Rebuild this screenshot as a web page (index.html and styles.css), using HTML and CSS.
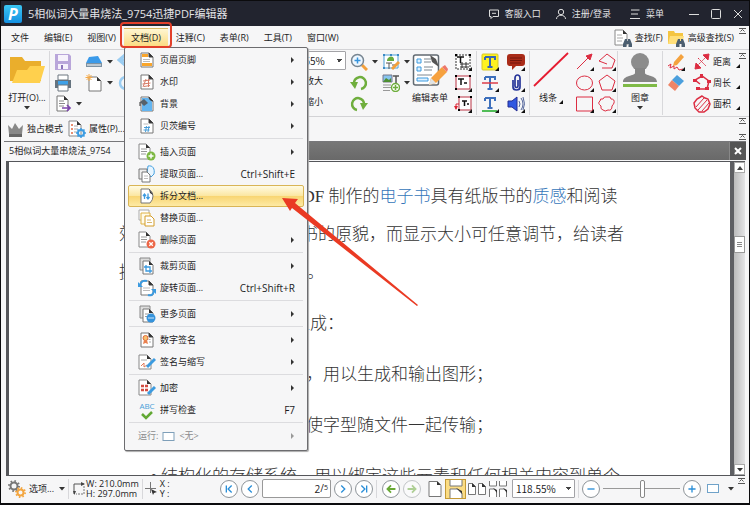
FILE: index.html
```html
<!DOCTYPE html>
<html lang="zh-CN">
<head>
<meta charset="utf-8">
<title>迅捷PDF编辑器</title>
<link rel="stylesheet" href="styles.css">
</head>
<body>
<svg class="sprite" aria-hidden="true">
  <symbol id="sheet" viewBox="0 0 18 18"><path d="M3 2h8l4 4v10H3z" fill="#fff" stroke="#777"/><path d="M11 2v4h4z" fill="#333" stroke="#444"/></symbol>
  <symbol id="pages" viewBox="0 0 18 18"><path d="M2 1h10v12H2z" fill="#ddd" stroke="#888"/><path d="M5 4h6l4 4v9H5z" fill="#fff" stroke="#777"/><path d="M11 4v4h4z" fill="#333"/></symbol>
  <symbol id="caret" viewBox="0 0 6 4"><path d="M0 0h6L3 3.5z" fill="#333"/></symbol>
  <symbol id="more" viewBox="0 0 7 6"><path d="M0 .5h7M0 5.5h7M1.500 3.500 3.500 1.500l2 2" fill="none" stroke="#555"/></symbol>
  <symbol id="corner" viewBox="0 0 4 4"><path d="M4 0v4H0z" fill="#111"/></symbol>
  <symbol id="binoc" viewBox="0 0 9 8"><path d="M2 0h2v2h1V0h2l2 5v3H5.500V5h-2v3H0V5z" fill="#4c5f70"/></symbol>
</svg>

<header class="titlebar">
  <span class="logo">P</span>
  <h1>5相似词大量串烧法_9754迅捷PDF编辑器</h1>
  <button class="t-btn"><svg width="12" height="12" viewBox="0 0 12 12"><path d="M1.500 2h9v6.500H5l-2 2v-2H1.500zM4 5.300h4" fill="none" stroke="#ddd"/></svg>客服入口</button>
  <button class="t-btn"><svg width="12" height="12" viewBox="0 0 12 12"><circle cx="6" cy="4" r="2.700" fill="none" stroke="#ddd"/><path d="M1.500 11c0-5 9-5 9 0" fill="none" stroke="#ddd"/></svg>注册/登录</button>
  <button class="t-btn"><svg width="12" height="12" viewBox="0 0 12 12"><path d="M2 2h8.500M2 6h7M1 10.500h10" stroke="#ddd"/></svg>菜单</button>
  <div class="win">
    <button aria-label="最小化"><svg width="12" height="12" viewBox="0 0 12 12"><path d="M1 6.500h10" stroke="#ddd"/></svg></button>
    <button aria-label="最大化"><svg width="12" height="12" viewBox="0 0 12 12"><rect x="1.500" y="1.500" width="9" height="9" rx="1" fill="none" stroke="#ddd"/></svg></button>
    <button aria-label="关闭"><svg width="12" height="12" viewBox="0 0 12 12"><path d="m2 2 8 8m0-8-8 8" stroke="#ddd"/></svg></button>
  </div>
</header>

<nav class="menubar">
  <button class="m-item">文件</button>
  <button class="m-item">编辑(E)</button>
  <button class="m-item">视图(V)</button>
  <div class="m-open">
    <button class="m-item active">文档(D)</button>
    <div class="mark-box"></div>
    <div class="menu" role="menu">
      <button class="row" role="menuitem"><svg viewBox="0 0 18 18"><use href="#sheet"/><path d="M4 3h6v3H4zM4 12h10v3H4z" fill="#f9a52b"/><path d="M5 8.500h7M5 10.500h7" stroke="#bbb"/></svg>页眉页脚<i class="arr"></i></button>
      <button class="row" role="menuitem"><svg viewBox="0 0 18 18"><use href="#sheet"/><path d="m5 8 7-1M4.500 11l8-1M8 6l-3 8M10.500 6v8M6 13.500l6-1" stroke="#d77b67" fill="none"/></svg>水印<i class="arr"></i></button>
      <button class="row" role="menuitem"><svg viewBox="0 0 18 18"><use href="#sheet"/><path d="M4 3h6l4 4v9H4z" fill="#63b5f1"/><path d="m2 7 4-3 4 4-4 3z" fill="#56616b"/><path d="M2 7v4" stroke="#333"/></svg>背景<i class="arr"></i></button>
      <button class="row" role="menuitem"><svg viewBox="0 0 18 18"><use href="#sheet"/><path d="M5.500 7h5" stroke="#bbb"/><path d="M6 10.500h6M5.500 13h6M8.500 9l-1 6M11 9l-1 6" stroke="#4a9ed8"/></svg>贝茨编号<i class="arr"></i></button>
      <hr>
      <button class="row" role="menuitem"><svg viewBox="0 0 18 18"><path d="M1 1h7l4 4v11H1z" fill="#fff" stroke="#888"/><path d="M8 1v4h4z" fill="#333"/><path d="M3 6h6M3 8.500h6M3 11h5" stroke="#999"/><circle cx="13" cy="13" r="4.500" fill="#7db843"/><path d="M13 10.500v5M10.500 13h5" stroke="#fff" stroke-width="1.500"/></svg>插入页面<i class="arr"></i></button>
      <button class="row" role="menuitem"><svg viewBox="0 0 18 18"><path d="M10 1c5-1 7 3 6 8l-3 3-4-4z" fill="#e7f5ff" stroke="#45a0e0"/><path d="M1 4h8v10H1z" fill="#eee" stroke="#777"/><path d="M4 7h5l3 3v7H4z" fill="#fff" stroke="#777"/><path d="M6 11h4M6 13.500h4" stroke="#bbb"/></svg>提取页面...<kbd>Ctrl+Shift+E</kbd></button>
      <button class="row current" role="menuitem"><svg viewBox="0 0 18 18"><path d="M3 2h8q4 3 4 7t-3 7H3z" fill="#fff" stroke="#777"/><path d="M11 2c1 2 3 3 4 6l-3-2z" fill="#333"/><path d="M6.500 12V7M5 9l1.500-2L8 9M10 6.500v5M8.500 10l1.500 2 1.500-2" fill="none" stroke="#3c9be0" stroke-width="1.300"/></svg>拆分文档...</button>
      <button class="row" role="menuitem"><svg viewBox="0 0 18 18"><path d="M1 1h10v10H1z" fill="#fff" stroke="#aaa"/><path d="M3 4h9v11H3z" fill="#fffbea" stroke="#dfb245"/><path d="M7 7h6l3 3v7H7z" fill="#fff" stroke="#d39c28"/><path d="M9 11h4M9 13.500h5" stroke="#d9b76b"/></svg>替换页面...</button>
      <button class="row" role="menuitem"><svg viewBox="0 0 18 18"><path d="M1 1h7l4 4v11H1z" fill="#fff" stroke="#888"/><path d="M8 1v4h4z" fill="#333"/><path d="M3 6h6M3 8.500h6M3 11h5" stroke="#999"/><circle cx="13" cy="13" r="4.500" fill="#ec6748"/><path d="m11.300 11.300 3.500 3.500m0-3.500-3.500 3.500" stroke="#fff" stroke-width="1.300"/></svg>删除页面<i class="arr"></i></button>
      <hr>
      <button class="row" role="menuitem"><svg viewBox="0 0 18 18"><use href="#pages"/><path d="M8 8v6h6M6 10h6v6" fill="none" stroke="#3c9be0" stroke-width="1.300"/></svg>裁剪页面<i class="arr"></i></button>
      <button class="row" role="menuitem"><svg viewBox="0 0 18 18"><use href="#sheet"/><path d="M5 9h7M5 11.500h7" stroke="#bbb"/><path d="M2 6c1-4 4-5 7-4M16 12c-1 4-3 5-6 4" fill="none" stroke="#3c9be0" stroke-width="2"/><path d="M0 3v5h5zM18 15v-5h-5z" fill="#3c9be0"/></svg>旋转页面...<kbd>Ctrl+Shift+R</kbd></button>
      <hr>
      <button class="row" role="menuitem"><svg viewBox="0 0 18 18"><use href="#pages"/><path d="M7 9h4M7 11.500h4" stroke="#999"/><circle cx="13" cy="13" r="4.500" fill="#3593dc"/><path d="M10.500 13h5" stroke="#fff" stroke-width="1.300" stroke-dasharray="1 1"/></svg>更多页面<i class="arr"></i></button>
      <hr>
      <button class="row" role="menuitem"><svg viewBox="0 0 18 18"><use href="#sheet"/><circle cx="7.500" cy="7" r="2.500" fill="#f5c16e" stroke="#e06a3c"/><path d="m6 9-1 4 2.500-1L10 13 9 9z" fill="#e9804f"/><path d="M10.500 8.500h2M11 11h2" stroke="#aaa"/></svg>数字签名<i class="arr"></i></button>
      <button class="row" role="menuitem"><svg viewBox="0 0 18 18"><path d="M1 2h8l4 4v10H1z" fill="#fff" stroke="#888"/><path d="M9 2v4h4z" fill="#333"/><path d="M3 7h6" stroke="#aaa"/><path d="m3 13 3-3v4l3-2" stroke="#e17b5a" fill="none"/><path d="m9 14 8-8" stroke="#3c9be0" stroke-width="3"/></svg>签名与缩写<i class="arr"></i></button>
      <hr>
      <button class="row" role="menuitem"><svg viewBox="0 0 18 18"><path d="M1 1h8l4 4v11H1z" fill="#fff" stroke="#888"/><path d="M9 1v4h4z" fill="#333"/><path d="M3 7h7M3 11h7" stroke="#d34d42" stroke-width="2.500" stroke-dasharray="3 1"/><path d="m10 15 7-7" stroke="#3c9be0" stroke-width="3"/></svg>加密<i class="arr"></i></button>
      <button class="row" role="menuitem"><span class="abc">ABC<svg viewBox="0 0 18 9"><path d="m4 3 4 4 6-6" fill="none" stroke="#62a834" stroke-width="2.500"/></svg></span>拼写检查<kbd>F7</kbd></button>
      <hr>
      <button class="row off" role="menuitem" disabled>运行:<svg class="mini" viewBox="0 0 13 11"><rect x="1" y="1.500" width="11" height="8" fill="#fff" stroke="#7e9fb9"/></svg>&lt;无&gt;<i class="arr"></i></button>
    </div>
  </div>
  <button class="m-item">注释(C)</button>
  <button class="m-item">表单(R)</button>
  <button class="m-item">工具(T)</button>
  <button class="m-item">窗口(W)</button>
  <div class="finders">
    <button><svg width="18" height="18" viewBox="0 0 18 18"><path d="M1 1h8l4 4v11H1z" fill="#fff" stroke="#888"/><path d="M9 1v4h4z" fill="#333"/><path d="M3 6h5M3 9h6M3 12h5" stroke="#aaa"/><use href="#binoc" x="9" y="10" width="9" height="8"/></svg>查找(F)</button>
    <button><svg width="18" height="18" viewBox="0 0 18 18"><path d="M1 2h6l1 2h8v11H1z" fill="#f4c542"/><path d="M3 7h14l-2 8H1z" fill="#ffdf7a"/><use href="#binoc" x="9" y="10" width="9" height="8"/></svg>高级查找(S)</button>
  </div>
  <svg class="more"><use href="#more"/></svg>
</nav>

<section class="ribbon">
  <button class="big">
    <svg viewBox="0 0 36 34"><path d="M1 4h12l3 4h16v20H1z" fill="#eaae2c"/><path d="M8 17h10l3-4h15l-5 17H3z" fill="#ffd04d"/></svg>
    <span>打开(O)...</span><svg class="caret"><use href="#caret"/></svg>
  </button>
  <div class="stack line">
    <button aria-label="保存"><svg viewBox="0 0 18 18"><path d="M1 1h14l2 2v14H1z" fill="#b9a6da"/><path d="M4 2h10v6H4zM4 11h10v5H4z" fill="#f6f2fb"/><path d="M7 12h2v4H7z" fill="#8b75ba"/></svg></button>
    <button aria-label="打印"><svg viewBox="0 0 18 18"><path d="M4 1h10v5H4z" fill="#fff" stroke="#6c7780"/><path d="M1 6h16v8H1z" fill="#65737f"/><path d="M4 7h10v4H4z" fill="#3fa1e8"/><path d="M4 11h10v6H4z" fill="#fff" stroke="#6c7780"/></svg></button>
    <button aria-label="导出"><svg viewBox="0 0 18 18"><path d="M3 1h7l4 4v11H3z" fill="#fff" stroke="#777"/><path d="M10 1v4h4z" fill="#333"/><path d="M5 6h5M5 8.500h6M5 11h5" stroke="#888"/><path d="M8 13h8m-3-3 3 3-3 3" fill="none" stroke="#7d46ad" stroke-width="1.700"/></svg><svg class="caret"><use href="#caret"/></svg></button>
  </div>
  <div class="stack">
    <button aria-label="扫描"><svg viewBox="0 0 18 18"><path d="m4 4 9-1 4 7H1z" fill="#3b9ae9"/><path d="M1 10h16v4H1z" fill="#7d91a1"/><path d="M2 12h14" stroke="#fff"/></svg><svg class="caret"><use href="#caret"/></svg></button>
    <button aria-label="新建"><svg viewBox="0 0 18 18"><path d="M4 3h8l4 4v10H4z" fill="#fff" stroke="#777"/><path d="M12 3v4h4z" fill="#333"/><path d="M4 0v7M.5 3.500h7M1.500 1l5 5m0-5-5 5" stroke="#f5a947"/></svg><svg class="caret"><use href="#caret"/></svg></button>
  </div>
  <div class="stack">
    <button aria-label="撤销"><svg viewBox="0 0 18 18"><path d="M8 2 2 7l6 5M2 7h14" stroke="#9bcdf2" stroke-width="3" fill="none"/></svg></button>
    <button aria-label="重做"><svg viewBox="0 0 18 18"><circle cx="9" cy="9" r="6" stroke="#9bcdf2" stroke-width="2.500" fill="none"/></svg></button>
  </div>
  <div class="stack zoomers">
    <select aria-label="缩放"><option>118.55%</option></select>
    <button>放大</button>
    <button>缩小</button>
  </div>
  <div class="stack">
    <button aria-label="缩放工具"><svg viewBox="0 0 18 18"><path d="m12 12 5 5" stroke="#f3a03c" stroke-width="3"/><circle cx="7.500" cy="7.500" r="6" fill="#eef7ff" stroke="#778591" stroke-width="1.500"/><path d="M7.500 4.500v6M4.500 7.500h6" stroke="#3593dc" stroke-width="1.500"/></svg><svg class="caret"><use href="#caret"/></svg></button>
    <button aria-label="向左旋转"><svg viewBox="0 0 18 18"><path d="M4 10a6 6 0 1 1 7 5" fill="none" stroke="#6fae3d" stroke-width="2.500"/><path d="M0 8h8l-3 7z" fill="#6fae3d"/></svg></button>
    <button aria-label="向右旋转"><svg viewBox="0 0 18 18"><path d="M14 10a6 6 0 1 0-7 5" fill="none" stroke="#6fae3d" stroke-width="2.500"/><path d="M18 8h-8l3 7z" fill="#6fae3d"/></svg></button>
  </div>
  <div class="stack">
    <button aria-label="编辑内容"><svg viewBox="0 0 18 18"><path d="M2 2h14v13H2z" fill="#fff" stroke="#4a9ed8"/><path d="M5 7c1-4 6-5 7-1v2H5z" fill="#67ac3d"/><path d="M1 1h2v2H1zM8 1h2v2H8zM15 1h2v2h-2zM1 14h2v2H1z" fill="#3b8ac4"/><path d="M4 10h6M7 10v6M10 12h3" stroke="#555"/><path d="m10 16 7-7" stroke="#f3a03c" stroke-width="3"/></svg><svg class="caret"><use href="#caret"/></svg></button>
    <button aria-label="添加内容"><svg viewBox="0 0 18 18"><path d="M1 1h9v7H1z" fill="#87c4ef" stroke="#778"/><path d="m1 8 3-4 3 2 2-2v4z" fill="#4e8f31"/><path d="M11 2h6M14 2v7" stroke="#555" stroke-width="1.500"/><path d="M1 11h8M1 13.500h8M1 16.500h7" stroke="#999"/><circle cx="13.500" cy="13.500" r="4" fill="#fff" stroke="#6fae3d" stroke-width="1.500"/><path d="M13.500 11v5M11 13.500h5" stroke="#6fae3d" stroke-width="1.500"/></svg><svg class="caret"><use href="#caret"/></svg></button>
  </div>
  <button class="big">
    <svg viewBox="0 0 36 34"><rect x="1.500" y="2" width="25" height="30" rx="2" fill="#fff" stroke="#616a72" stroke-width="1.500"/><path d="M5 6h4v4H5zM5 14h4v4H5zM5 25h11v3H5z" fill="#dff1ff" stroke="#3c9be0"/><path d="M12 6h7M12 9h7M12 14h9M12 17h8M5 22h15" stroke="#7c8790"/><path d="m18 2 6 4 3 8-7-5z" fill="#555"/><path d="m19 25 11-11 5 5-11 11-7 2z" fill="#f6a13f"/><path d="m30 14 3-2 3 4-1 3z" fill="#ee776a"/><path d="m17 32 2-7 5 5z" fill="#dfe3e6"/></svg>
    <span>编辑表单</span>
  </button>
  <div class="stack">
    <button aria-label="文本字段"><svg viewBox="0 0 18 18"><rect x="2" y="2" width="14" height="14" fill="#fff" stroke="#333" stroke-dasharray="2 1"/><path d="M3 4h7M6.500 4v6" stroke="#111" stroke-width="1.500"/><path d="M6 11h9M6 14h9M8 9v6M12 9v6" stroke="#333"/><path d="M1 1h2v2H1zM15 1h2v2h-2z"/><use href="#corner" x="14" y="14" width="4" height="4"/></svg></button>
    <button aria-label="文本框"><svg viewBox="0 0 18 18"><rect x="2" y="2" width="14" height="13" fill="#fff" stroke="#b93345"/><path d="M4 5h6M7 5v6M10 9h3" stroke="#111" stroke-width="1.500"/><path d="M1 1h2v2H1zM15 1h2v2h-2zM1 14h2v2H1z"/><use href="#corner" x="14" y="14" width="4" height="4"/></svg></button>
    <button aria-label="标注"><svg viewBox="0 0 18 18"><rect x="5" y="2" width="12" height="13" fill="#fff" stroke="#b93345"/><path d="M8 6h5M10.500 6v5M13 9h2" stroke="#111" stroke-width="1.500"/><path d="M5 9H2v5" fill="none" stroke="#dc2434"/><path d="M0 11h4l-2 4z" fill="#dc2434"/><path d="M4 1h2v2H4zM16 1h2v2h-2zM4 14h2v2H4z"/><use href="#corner" x="14" y="14" width="4" height="4"/></svg></button>
  </div>
  <div class="stack line">
    <button aria-label="高亮"><svg viewBox="0 0 18 18"><rect x="1" y="1" width="16" height="16" rx="1" fill="#fff21f" stroke="#d5c72c"/><path d="M4 4h10v3M4 7V4m5 0v10M6.500 14h5" fill="none" stroke="#3866b1" stroke-width="2"/><use href="#corner" x="14" y="14" width="4" height="4"/></svg></button>
    <button aria-label="删除线"><svg viewBox="0 0 18 18"><path d="M4 3h10v3M4 6V3m5 0v12M6.500 15h5" fill="none" stroke="#3d6fbc" stroke-width="2"/><path d="M1 9h16" stroke="#dc3c4a" stroke-width="1.500"/><use href="#corner" x="14" y="14" width="4" height="4"/></svg></button>
    <button aria-label="下划线"><svg viewBox="0 0 18 18"><path d="M4 3h10v3M4 6V3m5 0v10M6.500 13h5" fill="none" stroke="#3d6fbc" stroke-width="2"/><path d="M1 16h15" stroke="#51bd58" stroke-width="2"/><use href="#corner" x="14" y="14" width="4" height="4"/></svg></button>
  </div>
  <div class="stack">
    <button aria-label="批注"><svg viewBox="0 0 18 18"><path d="M3 1h12q3 0 3 3v6q0 3-3 3H9l-4 4v-4H3q-3 0-3-3V4q0-3 3-3z" fill="#a92b18"/><path d="M3 5h12M3 7.500h12M3 10h11" stroke="#74170d"/><use href="#corner" x="14" y="14" width="4" height="4"/></svg></button>
    <button aria-label="附件"><svg viewBox="0 0 18 18"><path d="M6 6v7c0 4 7 4 7 0V4c0-4-5-4-5 0v8c0 2 3 2 3 0V6" fill="none" stroke="#263599" stroke-width="1.700"/><use href="#corner" x="14" y="14" width="4" height="4"/></svg></button>
    <button aria-label="声音"><svg viewBox="0 0 18 18"><path d="M1 6h4l5-4v14l-5-4H1z" fill="#3158e1" stroke="#252d92"/><path d="M12 6q2 3 0 6m2-9q4 6 0 12m2-13q3 7 0 13" fill="none" stroke="#53659a"/><use href="#corner" x="14" y="14" width="4" height="4"/></svg></button>
  </div>
  <button class="big line">
    <svg viewBox="0 0 36 34"><path d="M1 33 35 0" stroke="#e61b30" stroke-width="1.800"/></svg>
    <span>线条<svg class="corner"><use href="#corner"/></svg></span>
  </button>
  <div class="stack red">
    <button aria-label="箭头"><svg viewBox="0 0 18 18"><path d="M1 16 14 3"/><path d="m16 1-2 6-4-4z" fill="#dc2d42"/><use href="#corner" x="14" y="14" width="4" height="4"/></svg></button>
    <button aria-label="椭圆"><svg viewBox="0 0 18 18"><ellipse cx="8.500" cy="9" rx="8" ry="7"/><use href="#corner" x="14" y="14" width="4" height="4"/></svg></button>
    <button aria-label="矩形"><svg viewBox="0 0 18 18"><path d="M.5 2h16v14H.5z"/><use href="#corner" x="14" y="14" width="4" height="4"/></svg></button>
  </div>
  <div class="stack red">
    <button aria-label="折线"><svg viewBox="0 0 18 18"><path d="M4 15h10l3-8-8-6-8 7 8 3"/><use href="#corner" x="14" y="14" width="4" height="4"/></svg></button>
    <button aria-label="多边形"><svg viewBox="0 0 18 18"><path d="m9 1 8 6-3 9H4L1 7z"/><use href="#corner" x="14" y="14" width="4" height="4"/></svg></button>
    <button aria-label="云朵"><svg viewBox="0 0 18 18"><path d="M9 2q4-1 4 2 4 0 3 4-1 2-2 3 0 5-4 4-3 2-5 0-3-1-2-4Q-1 8 2 6q0-3 3-2 1-3 4-2"/><use href="#corner" x="14" y="14" width="4" height="4"/></svg></button>
  </div>
  <button class="big line">
    <svg viewBox="0 0 36 34"><circle cx="18" cy="9" r="9" fill="#8c8c8c"/><path d="M13 15h10v5c0 3 12 2 12 9H1c0-7 12-6 12-9z" fill="#858585"/><path d="M1 31h34v3H1z" fill="#7fba47"/></svg>
    <span>图章</span><svg class="caret"><use href="#caret"/></svg>
  </button>
  <div class="stack line">
    <button aria-label="铅笔"><svg viewBox="0 0 18 18"><path d="m7 9 7-8 3 3-7 8-4 1z" fill="#f4a23e"/><path d="m1 13 3-2-1 4 4-2v3l3-2 2 3 4-1" fill="none" stroke="#e03043"/><use href="#corner" x="14" y="14" width="4" height="4"/></svg></button>
    <button aria-label="橡皮"><svg viewBox="0 0 18 18"><path d="m1 11 4-5 7 6-4 5z" fill="#ef8567"/><path d="m5 6 5-5 7 6-5 5z" fill="#4b9fdd"/></svg></button>
  </div>
  <div class="stack red text">
    <button><svg viewBox="0 0 18 18"><path d="M4 13 13 4M5 5l8 8" stroke-dasharray="2 1"/><path d="m2 16 1-6 5 5zM16 1l-6 1 5 5z" fill="#dc2d42"/></svg>距离<svg class="corner"><use href="#corner"/></svg></button>
    <button><svg viewBox="0 0 18 18"><path d="M5 15h9l2-8-7-5-7 4 5 4" stroke-width="1.500"/><path d="M7 0h3v4H7zM0 5h4v3H0zM14 6h4v3h-4zM3 13h4v3H3zM12 13h4v3h-4z" fill="#dc2d42" stroke="none"/></svg>周长<svg class="corner"><use href="#corner"/></svg></button>
    <button><svg viewBox="0 0 18 18"><path d="m9 1 3 2 3 1 2 5-2 5-4 3H6l-4-4-1-5 3-4z" stroke-width="1.500"/><path d="m3 12 8-9M5 15l9-10M9 16l7-8"/></svg>面积<svg class="corner"><use href="#corner"/></svg></button>
  </div>
  <svg class="more"><use href="#more"/></svg>
</section>

<section class="quick">
  <button><svg width="17" height="18" viewBox="0 0 17 18"><path d="m1 5 4 4 3-6 4 6 4-4-1 9H2z" fill="#888"/><path d="M2 14h13v3H2z" fill="#666"/></svg>独占模式</button>
  <button><svg width="18" height="18" viewBox="0 0 18 18"><path d="M1 1h8l4 4v11H1z" fill="#fff" stroke="#888"/><path d="M9 1v4h4z" fill="#333"/><path d="M3 5h2M3 9h2M3 13h2" stroke="#e26942" stroke-width="1.500"/><path d="M6 6h4M6 9h4M6 12h3" stroke="#aaa"/><circle cx="13" cy="13" r="3" fill="none" stroke="#3d9ce1" stroke-width="2"/><path d="M13 8v2M13 16v2M8 13h2M16 13h2M9.500 9.500l1 1m5 5 1 1m-7 0 1-1m5-5 1-1" stroke="#3d9ce1" stroke-width="1.500"/></svg>属性(P)...</button>
  <div class="mores"><svg class="more"><use href="#more"/></svg><svg class="more"><use href="#more"/></svg></div>
</section>

<div class="tabs">
  <button class="tab">5相似词大量串烧法_9754</button>
  <button class="close" aria-label="关闭文档"><svg width="8" height="8" viewBox="0 0 8 8"><path d="m1 1 6 6m0-6L1 7" stroke="#fff" stroke-width="2"/></svg></button>
</div>

<main class="viewer">
  <article class="page">
    <p class="opening">PDF 制作的<a href="#">电子书</a>具有纸版书的<a href="#">质感</a>和阅读</p>
    <p class="split"><span>效</span><span>书的原貌，而显示大小可任意调节，给读者</span></p>
    <p class="split ending"><span>提</span><span>。</span></p>
    <p class="loose opening">组成：</p>
    <p class="loose rest">，用以生成和输出图形；</p>
    <p class="loose rest">使字型随文件一起传输；</p>
    <ul class="loose"><li>结构化的存储系统，用以绑定这些元素和任何相关内容到单个</li></ul>
  </article>
  <div class="scroll">
    <button aria-label="向上滚动"><svg width="6" height="4" viewBox="0 0 6 4"><path d="m0 4 3-4 3 4z" fill="#444"/></svg></button>
    <div class="track"><div class="thumb"></div></div>
    <button aria-label="向下滚动"><svg width="6" height="4"><use href="#caret"/></svg></button>
  </div>
</main>

<footer class="status">
  <button class="opts"><svg width="18" height="18" viewBox="0 0 18 18"><circle cx="6" cy="6" r="3.500" fill="none" stroke="#777" stroke-width="2"/><circle cx="6" cy="6" r="5" fill="none" stroke="#777" stroke-width="2" stroke-dasharray="1.500 2.400"/><circle cx="12.500" cy="12.500" r="3" fill="none" stroke="#f3a640" stroke-width="2"/><circle cx="12.500" cy="12.500" r="4.500" fill="none" stroke="#f3a640" stroke-width="2" stroke-dasharray="1.500 2"/></svg>选项...<svg class="caret"><use href="#caret"/></svg></button>
  <div class="size"><svg width="12" height="13" viewBox="0 0 12 13"><path d="M1 12V2h10" fill="none" stroke="#555"/><path d="M11 4v8H3" fill="none" stroke="#777" stroke-dasharray="2 1"/><path d="m8 0 4 2-4 2zM0 9h3l-1.500 4z" fill="#444"/></svg><p>W: 210.0mm<br>H: 297.0mm</p></div>
  <div class="pos"><svg width="12" height="13" viewBox="0 0 12 13"><path d="M5.500 0v11M0 6.500h11" stroke="#777"/><path d="m6 7 6 3-3 1-1 2z" fill="#333"/></svg><p>X :<br>Y :</p></div>
  <div class="pager">
    <button class="round" aria-label="第一页"><svg viewBox="0 0 18 18"><path d="M6 5v8m6-8L8 9l4 4" /></svg></button>
    <button class="round" aria-label="上一页"><svg viewBox="0 0 18 18"><path d="M11 5 7 9l4 4"/></svg></button>
    <label class="pagebox"><input aria-label="页码" value="2"><span>/<small>5</small></span></label>
    <button class="round" aria-label="下一页"><svg viewBox="0 0 18 18"><path d="m7 5 4 4-4 4"/></svg></button>
    <button class="round" aria-label="最后一页"><svg viewBox="0 0 18 18"><path d="M12 5v8M6 5l4 4-4 4"/></svg></button>
  </div>
  <div class="history">
    <button class="round green" aria-label="后退"><svg viewBox="0 0 18 18"><path d="M14 9H5m4-4L5 9l4 4"/></svg></button>
    <button class="round green faded" aria-label="前进"><svg viewBox="0 0 18 18"><path d="M4 9h9M9 5l4 4-4 4"/></svg></button>
  </div>
  <div class="views">
    <button aria-label="单页"><svg viewBox="0 0 18 18"><path d="M3 1.500h8l4 4v11H3z" fill="#fff" stroke="#777"/><path d="M11 1v4h4z" fill="#333"/></svg></button>
    <button class="on" aria-label="连续"><svg viewBox="0 0 18 18"><path d="M3 0v6h12V0M3 18V9h8l4 4v5" fill="#fff" stroke="#777"/><path d="m9 8 6 3v3z" fill="#333"/></svg></button>
    <button aria-label="双页"><svg viewBox="0 0 18 18"><path d="M.5 3.500h4l3 3v8h-7zM10.500 3.500h4l3 3v8h-7z" fill="#fff" stroke="#777"/><path d="M4 3v4h4zM14 3v4h4z" fill="#333"/></svg></button>
    <button aria-label="双页连续"><svg viewBox="0 0 18 18"><path d="M.5 1v5h7V1M10.500 1v5h7V1M.5 17V9h5l2 2v6M10.500 17V9h5l2 2v6" fill="#fff" stroke="#777"/><path d="m4 8 4 2v3zM14 8l4 2v3z" fill="#333"/></svg></button>
  </div>
  <select aria-label="显示比例"><option>118.55%</option></select>
  <div class="zoombar">
    <button class="round" aria-label="缩小比例"><svg viewBox="0 0 18 18"><path d="M5 9h8"/></svg></button>
    <input type="range" aria-label="缩放滑块" min="0" max="100" value="52">
    <button class="round" aria-label="放大比例"><svg viewBox="0 0 18 18"><path d="M5 9h8M9 5v8"/></svg></button>
    <button class="fit" aria-label="适合窗口"><svg width="13" height="11" viewBox="0 0 13 11"><rect x=".5" y="1.500" width="11" height="8" fill="#fff" stroke="#6fa2c9"/></svg></button>
    <svg class="caret"><use href="#caret"/></svg>
  </div>
  <svg class="more"><use href="#more"/></svg>
</footer>

<svg class="pointer" width="140" height="112" viewBox="0 0 140 112" aria-hidden="true"><path d="M1 1 17 2l-3 4 123 102-1 1L11 11l-2 3z" fill="#ea3a23"/></svg>
</body>
</html>
```
FILE: styles.css
```css
* { box-sizing: border-box; }

body {
  margin: 0;
  height: 100vh;
  display: flex;
  flex-direction: column;
  overflow: hidden;
  position: relative;
  border: solid #0b0b0d;
  border-width: 1px 1px 2px 1px;
  background: #f6f6f7;
  color: #1c1c1e;
  font: 9px/12px "Open Sans", "Noto Sans CJK SC", sans-serif;
}

button, select, input {
  font: inherit;
  color: inherit;
  background: none;
  border: 0;
  padding: 0;
  margin: 0;
}

button { display: flex; align-items: center; white-space: nowrap; }
p, h1, ul { margin: 0; padding: 0; }
svg { flex: none; display: block; }
.sprite { position: absolute; width: 0; height: 0; }
.caret { width: 6px; height: 4px; }
.corner { width: 4px; height: 4px; }
.more { width: 7px; height: 6px; }

.titlebar {
  flex: none;
  display: flex;
  align-items: center;
  height: 25px;
  padding: 0 5px 0 3px;
  background: #22242f;
  color: #e2e3e6;
}
.titlebar h1 { flex: 1; margin-left: 6px; font-size: 11px; line-height: 16px; font-weight: 400; }
.logo {
  width: 18px;
  height: 18px;
  border-radius: 2px;
  background: linear-gradient(#3cc7f3, #1490e2);
  color: #fff;
  font: italic 700 16px/18px "Open Sans", sans-serif;
  text-align: center;
}
.t-btn { gap: 5px; margin-right: 14px; }
.t-btn + .t-btn + .t-btn { margin-left: 4px; margin-right: 24px; }
.win { display: flex; gap: 10px; }

.menubar {
  flex: none;
  display: flex;
  align-items: center;
  gap: 1px;
  height: 24px;
  padding: 0 3px;
  border-bottom: 1px solid #d3d3d6;
}
.m-item { height: 19px; padding: 0 7px; border: 1px solid transparent; border-width: 1px 0; }
.m-open { position: relative; }
.m-item.active { background: linear-gradient(#fff6d2, #fbdc83); border-color: #d7b660; }
.mark-box {
  position: absolute;
  inset: -6px -4px -1px -4px;
  border: 2px solid #e2402a;
  border-radius: 4px;
  z-index: 3;
  pointer-events: none;
}
.finders { display: flex; gap: 4px; margin: 0 4px 0 auto; }
.finders button { gap: 3px; }
.menubar .more, .ribbon .more { align-self: start; margin-top: 2px; }

.menu {
  position: absolute;
  z-index: 2;
  top: 19px;
  left: 0;
  width: 184px;
  padding: 1px 3px 3px;
  background: #f6f6f7;
  border: 1px solid #6c6c6f;
  border-radius: 2px;
  box-shadow: 1px 1px 1px #aaa;
}
.row {
  width: 100%;
  height: 22px;
  padding: 0 8px 0 9px;
  gap: 4px;
  border: 1px solid transparent;
  border-radius: 2px;
}
.row > svg { width: 18px; height: 18px; }
.row > svg.mini { width: 13px; height: 11px; }
.row kbd { margin-left: auto; font: inherit; font-size: 10px; }
.row.current { background: linear-gradient(#fffbe3, #fbe6a0 50%, #f8d572 51%, #fdeaa5); border-color: #d9b556; }
.row.off { color: #8b8b8d; }
.abc { width: 18px; color: #4a9ed8; font-size: 8px; line-height: 10px; }
.abc svg { width: 18px; height: 9px; }
.arr { margin: 0 1px 0 auto; border: solid transparent; border-width: 3px 0 3px 3px; border-left-color: #333; }
.off .arr { border-left-color: #999; }
.menu hr { margin: 1px; height: 2px; border: solid #dcdcdf; border-width: 1px 0 0; }

.ribbon {
  flex: none;
  display: grid;
  grid-template-columns: 44px 32px 32px 137px 96px 32px 32px 40px 26px 27px 26px 43px 22px 23px 45px 27px minmax(48px, 1fr) 7px;
  padding: 1px 3px 1px 4px;
  height: 67px;
  border-bottom: 1px solid #d3d3d6;
}
.stack { display: flex; flex-direction: column; padding-left: 4px; }
.stack button { height: 21px; gap: 4px; }
.stack button > svg:first-child, .views svg { width: 18px; height: 18px; }
.line { border-left: 1px solid #d8d8db; }
.big { flex-direction: column; gap: 2px; padding-top: 1px; height: 100%; }
.big > svg:first-child { width: 36px; height: 36px; }
.big > span { display: flex; align-items: end; gap: 2px; height: 14px; line-height: 12px; }
.red svg { fill: none; stroke: #dc2d42; }
.red use { stroke: none; }
.stack.text button { gap: 2px; }
.stack.text .corner { margin: 8px 0 0 3px; stroke: none; }
.zoomers { padding-left: 31px; }
.zoomers button { padding-left: 24px; }

select {
  appearance: none;
  height: 19px;
  border: 1px solid #a3a3a7;
  border-radius: 1px;
  padding: 0 14px 0 3px;
  background:
    linear-gradient(135deg, #444 50%, transparent 50%) right 3px center / 3px 3px no-repeat,
    linear-gradient(225deg, #444 50%, transparent 50%) right 6px center / 3px 3px no-repeat,
    #fff;
  font: 10px/16px "Noto Sans CJK SC", sans-serif;
}

.quick {
  flex: none;
  display: flex;
  align-items: center;
  gap: 5px;
  height: 24px;
  padding: 0 3px 0 6px;
}
.quick button { gap: 3px; }
.mores { margin-left: auto; display: grid; gap: 10px; }

.tabs {
  flex: none;
  display: flex;
  height: 19px;
  margin: 0 3px;
  border-top: 1px solid #77777a;
  background: linear-gradient(#777, #696969);
}
.tab { width: 144px; padding-left: 5px; background: #f6f6f7; }
.close { margin-left: auto; width: 17px; justify-content: center; background: #555; border-left: 1px solid #888; }

.viewer {
  flex: 1;
  min-height: 0;
  display: flex;
  margin: 1px 4px 0 5px;
  border: solid #55565a;
  border-width: 1px 0 1px 3px;
}
.page {
  flex: 1;
  overflow: hidden;
  background: #fff;
  border-right: 4px solid #5e5f63;
  padding: 16px 0 0 110px;
  color: #333;
  font: 300 17px/38px "Liberation Serif", "Noto Sans CJK SC", serif;
  white-space: nowrap;
}
.page a { color: #3576ba; text-decoration: none; }
.opening { padding-left: 174px; }
.rest { padding-left: 187px; }
.split { display: grid; grid-template-columns: 182px auto; justify-content: start; }
.split.ending { grid-template-columns: 188px auto; }
.loose { margin-top: 13px; }
.page ul { padding-left: 42px; }
.page li::marker { content: "• "; }

.scroll { width: 11px; display: flex; flex-direction: column; background: linear-gradient(90deg, #bbb, #e4e4e6); }
.scroll button { height: 11px; justify-content: center; border: 1px solid #aaa; background: #fff; }
.track { flex: 1; padding-top: 63px; }
.thumb {
  height: 17px;
  border: 1px solid #999;
  background: repeating-linear-gradient(#888 0 1px, transparent 1px 2px) center / 5px 5px no-repeat, #fff;
}

.status {
  flex: none;
  display: flex;
  align-items: center;
  height: 27px;
  padding: 0 4px 2px 7px;
}
.status > div { display: flex; align-items: center; }
.opts { gap: 3px; }
.opts .caret { margin-left: 2px; }
.size, .pos { line-height: 10px; height: 20px; border-left: 1px solid #d8d8db; }
.size { margin-left: 3px; padding-left: 4px; gap: 1px; }
.pos { margin-left: 3px; padding-left: 2px; gap: 3px; }
.round {
  flex: none;
  width: 18px;
  height: 18px;
  border: 1px solid #8e9499;
  border-radius: 50%;
  background: #fff;
}
.round svg { width: 16px; height: 16px; fill: none; stroke: #2b8fd8; stroke-width: 1.5; }
.green svg { stroke: #69a936; stroke-width: 2; }
.faded { opacity: .5; }
.pager { margin-left: auto; gap: 3px; }
.pagebox { display: flex; width: 69px; height: 19px; padding-right: 2px; border: 1px solid #999; border-radius: 2px; background: #fff; font-size: 10px; line-height: 16px; }
.pagebox input { width: 100%; min-width: 0; text-align: right; }
.pagebox small { font-size: 7px; vertical-align: 2px; }
.history { margin-left: 3px; padding-left: 5px; gap: 3px; border-left: 1px solid #d8d8db; }
.views { margin-left: 3px; }
.views button { width: 21px; height: 20px; justify-content: center; border: 1px solid transparent; }
.views .on { background: #fbdc83; border-color: #c49a36; }
.status select { width: 63px; margin: 0 3px 0 4px; }
.zoombar { padding-left: 3px; gap: 3px; border-left: 1px solid #d8d8db; }
.zoombar input { appearance: none; width: 77px; height: 18px; background: linear-gradient(#999, #999) center / 100% 1px no-repeat; }
.zoombar input::-webkit-slider-thumb { appearance: none; width: 5px; height: 18px; border: 1px solid #888; border-radius: 2px; background: #fff; }
.fit { margin-left: 3px; }
.zoombar .caret { margin: 0 4px 0 5px; }
.status > .more { align-self: start; margin-top: 2px; }

.pointer { position: absolute; z-index: 5; left: 280px; top: 196px; }
```
